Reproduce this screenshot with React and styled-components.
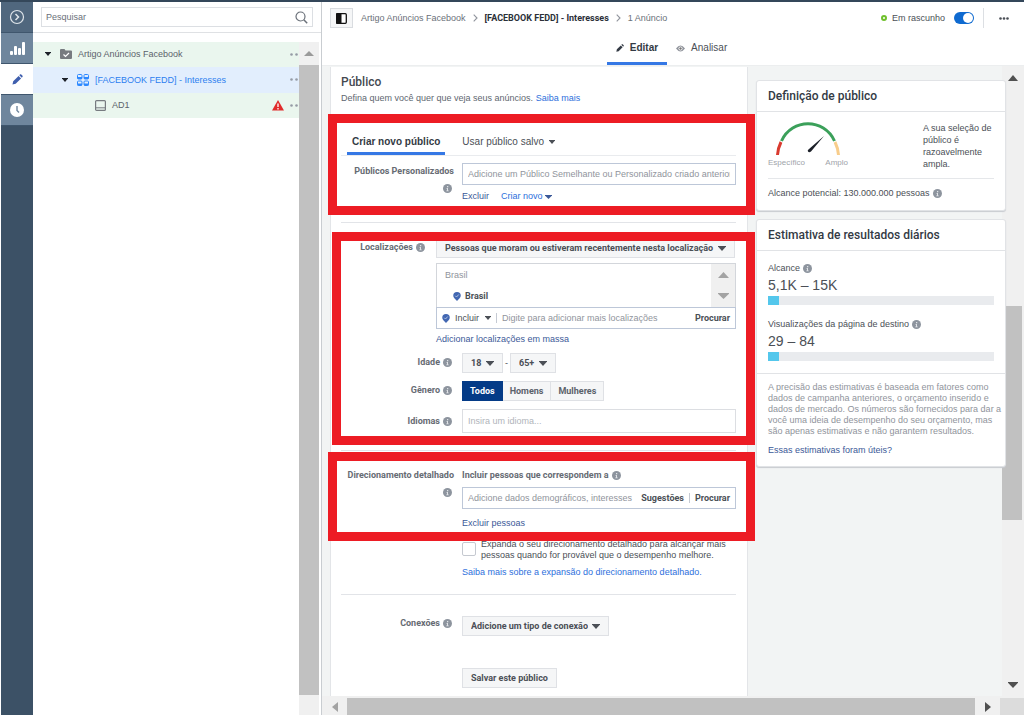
import React from "react";
import styled, { createGlobalStyle, css } from "styled-components";

const Global = createGlobalStyle`
  *, *::before, *::after { box-sizing: border-box; }
  body {
    margin: 0;
    font-family: "Liberation Sans", Arial, sans-serif;
    font-size: 9px;
    line-height: 12px;
    color: #4b4f56;
    background: #fff;
  }
  button, input, select { font: inherit; color: inherit; margin: 0; }
  button { cursor: pointer; }
  a { text-decoration: none; }
  h1, h2, p { margin: 0; font-weight: inherit; font-size: inherit; }
`;

const strong = css`
  font-family: Roboto, "Liberation Sans", sans-serif;
  font-weight: 700;
`;

const Shell = styled.div`
  display: flex;
  height: 100vh;
  border-top: 2px solid #34475a;
  overflow: hidden;
`;

/* Navigation rail */
const Rail = styled.nav`
  display: flex;
  flex-direction: column;
  width: 32px;
  flex: none;
  margin-left: 1px;
  background: #3c5166;
`;
const RailButton = styled.button`
  display: flex;
  align-items: center;
  justify-content: center;
  height: 31px;
  padding: 0;
  border: 0;
  border-bottom: 1px solid #3f566d;
  color: #fff;
  background: ${(p) => (p.$tone === "active" ? "#fff" : p.$tone === "dark" ? "#50677e" : "#6f869d")};
`;

/* Campaign tree */
const Tree = styled.aside`
  display: flex;
  flex-direction: column;
  width: 289px;
  flex: none;
  border-right: 1px solid #c9cdd1;
`;
const SearchBar = styled.div`
  padding: 5px 8px;
  height: 31px;
  border-bottom: 1px solid #dfe1e4;
`;
const SearchField = styled.label`
  display: flex;
  align-items: center;
  height: 20px;
  padding: 0 4px;
  border: 1px solid #dcdfe3;
`;
const BareInput = styled.input`
  flex: 1;
  min-width: 0;
  padding: 0;
  border: 0;
  outline: 0;
  background: none;
  &::placeholder { color: ${(p) => p.$hint || "#90949c"}; opacity: 1; }
`;
const TreeBody = styled.div`
  display: flex;
  flex: 1;
  padding: 9px 2px 0 0;
`;
const TreeList = styled.div`
  flex: 1;
  min-width: 0;
`;
const TreeRow = styled.div`
  display: flex;
  align-items: center;
  gap: 6px;
  height: ${(p) => (p.$selected ? 26 : 25)}px;
  padding: 0 1px 1px ${(p) => p.$indent}px;
  color: ${(p) => (p.$selected ? "#2d7ff0" : "#5b626b")};
  background: ${(p) => (p.$selected ? "#e2eefd" : "#eaf6ee")};
`;
const NodeToggle = styled.button`
  display: flex;
  margin-right: 3px;
  padding: 0;
  border: 0;
  background: none;
`;
const TreeName = styled.span`
  flex: 1;
`;
const Dots = styled.button`
  padding: 0;
  border: 0;
  background: none;
  display: flex;
`;

/* Scroll bars */
const ScrollColumn = styled.div`
  display: flex;
  flex-direction: column;
  align-items: stretch;
  flex: none;
  width: ${(p) => p.$width}px;
  padding-bottom: ${(p) => p.$bottom || 0}px;
  background: #f0f0f0;
`;
const ScrollEnd = styled.div`
  display: flex;
  align-items: center;
  justify-content: center;
  flex: none;
  height: 23px;
  width: ${(p) => p.$width || "auto"};
`;
const Thumb = styled.div`
  flex: ${(p) => p.$grow || 1};
  margin-right: ${(p) => p.$inset || 0}px;
  background: #c1c1c1;
`;
const Gap = styled.div`
  flex: ${(p) => p.$grow};
`;
const ScrollRow = styled.div`
  display: flex;
  align-items: stretch;
  flex: none;
  height: 19px;
  padding-top: 2px;
  overflow: hidden;
  background: #f0f0f0;
`;
const RowEnd = styled.div`
  display: flex;
  align-items: center;
  justify-content: center;
  flex: none;
  width: 25px;
`;
const Corner = styled.div`
  width: 24px;
  background: #dcdcdc;
`;

/* Editor */
const Editor = styled.main`
  display: flex;
  flex-direction: column;
  flex: 1;
  min-width: 0;
`;
const Header = styled.header`
  flex: none;
  height: 64px;
  padding: 4px 8px 0;
  border-bottom: 1px solid #eceeef;
`;
const HeaderRow = styled.div`
  display: flex;
  align-items: center;
  height: 24px;
`;
const PanelButton = styled.button`
  display: flex;
  align-items: center;
  justify-content: center;
  width: 23px;
  height: 20px;
  padding: 0;
  border: 1px solid #d9dce0;
  background: #f5f6f7;
`;
const Crumbs = styled.div`
  display: flex;
  align-items: center;
  gap: 7px;
  flex: 1;
  margin-left: 8px;
  color: #6a7079;
`;
const Current = styled.span`
  ${strong}
  color: #2b3038;
`;
const Status = styled.label`
  display: flex;
  align-items: center;
  gap: 5px;
`;
const Ring = styled.span`
  width: 6px;
  height: 6px;
  border: 2px solid #6fc02c;
  border-radius: 50%;
`;
const Switch = styled.input.attrs({ type: "checkbox", role: "switch" })`
  appearance: none;
  display: flex;
  width: 20px;
  height: 12px;
  margin-left: 4px;
  border-radius: 6px;
  background: #0f6ad0;
  &::after {
    content: "";
    width: 10px;
    height: 10px;
    margin: 1px 1px 1px auto;
    border-radius: 50%;
    background: #fff;
  }
`;
const MoreButton = styled.button`
  display: flex;
  align-items: center;
  height: 20px;
  margin-left: 9px;
  padding: 0 7px 0 15px;
  border: 0;
  border-left: 1px solid #dcdfe3;
  background: none;
`;
const ViewTabs = styled.div`
  display: flex;
  justify-content: center;
  height: 35px;
  padding-right: 3px;
`;
const tabText = css`
  display: flex;
  align-items: center;
  border: 0;
  border-bottom: 3px solid ${(p) => (p.$active ? "#3578e5" : "transparent")};
  background: none;
  font-size: 10px;
  font-weight: ${(p) => (p.$active ? 700 : 400)};
  color: ${(p) => (p.$active ? "#333a44" : "#4b4f56")};
`;
const ViewTab = styled.button`
  ${tabText}
  gap: 6px;
  padding: 4px 9px 0;
`;
const Workspace = styled.div`
  display: flex;
  flex: 1;
  min-height: 0;
  background: #f2f4f4;
`;
const Columns = styled.div`
  display: flex;
  align-items: stretch;
  gap: 8px;
  flex: 1;
  min-width: 0;
  padding: 1px 0 0 8px;
`;

/* Audience form */
const FormCard = styled.form`
  flex: 1;
  min-width: 0;
  padding: 0 11px 0 10px;
  border: 1px solid #e3e5e8;
  border-width: 0 1px;
  background: #fff;
`;
const FormHead = styled.div`
  height: 47px;
  padding-top: 8px;
  color: #606770;
`;
const FormTitle = styled.h1`
  font-family: Roboto, sans-serif;
  font-weight: 500;
  font-size: 12px;
  line-height: 14px;
  margin-bottom: 3px;
  color: #444950;
`;
const Link = styled.a`
  color: ${(p) => (p.$bright ? "#2d6fdc" : "#3b5998")};
`;
const Framed = styled.section`
  display: flow-root;
  position: relative;
  height: ${(p) => p.$height}px;
  &::after {
    content: "";
    position: absolute;
    inset: 0 -19px 0 ${(p) => p.$left}px;
    border: 9px solid #ed1c24;
    pointer-events: none;
    z-index: 3;
  }
`;
const Rule = styled.hr`
  margin: ${(p) => p.$before}px 0 ${(p) => p.$after}px;
  border: 0;
  border-top: 1px solid #e2e4e8;
`;
const AudienceTabs = styled.div`
  display: flex;
  gap: 12px;
  height: 42px;
  padding: 17px 6px 0;
  border-bottom: 1px solid #e9ebee;
`;
const AudienceTab = styled.button`
  ${tabText}
  gap: 5px;
  padding: 0 5px;
`;
const Row = styled.div`
  display: grid;
  grid-template-columns: ${(p) => (p.$wide ? "86px" : "113px")} minmax(0, 1fr);
  column-gap: ${(p) => (p.$wide ? 9 : 8)}px;
  margin-top: ${(p) => p.$top || 8}px;
`;
const Label = styled.label`
  ${strong}
  display: flex;
  flex-wrap: wrap;
  align-content: flex-start;
  justify-content: flex-end;
  align-items: center;
  gap: 7px 3px;
  padding: ${(p) => p.$pad || 3}px ${(p) => (p.$stack ? 0 : 2)}px 0 0;
  white-space: nowrap;
  color: #666b73;
  & > svg { margin-right: ${(p) => (p.$stack ? 2 : 0)}px; }
`;
const FieldTitle = styled.div`
  ${strong}
  display: flex;
  align-items: center;
  gap: 3px;
  padding: 3px 0 6px;
  color: #666b73;
`;
const Field = styled.div`
  display: flex;
  align-items: center;
  height: ${(p) => p.$height || 22}px;
  padding: 0 5px;
  border: 1px solid ${(p) => (p.$plain ? "#dcdee2" : "#bdc7d8")};
  background: #fff;
`;
const Links = styled.div`
  display: flex;
  align-items: center;
  gap: 12px;
  padding-top: ${(p) => p.$top || 5}px;
`;
const TextButton = styled.button`
  ${strong}
  padding: 0 0 0 ${(p) => p.$before || 0}px;
  border: 0;
  background: none;
  white-space: nowrap;
`;
const Divider = styled.span`
  width: 1px;
  height: 10px;
  margin: 0 5px;
  background: #c5cad3;
`;
const Drop = styled.span`
  ${strong}
  display: inline-flex;
  align-items: center;
  gap: 4px;
  height: 20px;
  padding: 0 8px;
  border: 1px solid #dfe1e5;
  background: #f5f6f7;
`;
const BareSelect = styled.select`
  appearance: none;
  padding: 0;
  border: 0;
  outline: 0;
  background: none;
`;
const Inline = styled.div`
  display: flex;
  align-items: center;
  gap: ${(p) => p.$gap || 2}px;
`;
const Places = styled.div`
  display: flex;
  height: 44px;
  margin-top: 5px;
  border: 1px solid #d3d6db;
  border-bottom: 0;
`;
const PlaceList = styled.div`
  flex: 1;
  padding: 5px 8px;
  color: #90949c;
`;
const Place = styled.div`
  ${strong}
  display: flex;
  align-items: center;
  gap: 4px;
  margin: 9px 0 0 8px;
  color: #4b4f56;
`;
const Stepper = styled.div`
  display: flex;
  flex-direction: column;
  align-items: center;
  justify-content: space-between;
  width: 24px;
  padding: 8px 0;
  background: #f0f0f0;
`;
const Segments = styled.div`
  display: flex;
`;
const Segment = styled.button`
  ${strong}
  height: 20px;
  padding: 0 7px;
  border: 1px solid ${(p) => (p.$on ? "#043b87" : "#dfe1e5")};
  border-left-width: ${(p) => (p.$on ? 1 : 0)}px;
  color: ${(p) => (p.$on ? "#fff" : "#5b626b")};
  background: ${(p) => (p.$on ? "#043b87" : "#f5f6f7")};
`;
const Expand = styled.div`
  display: flex;
  gap: 5px;
  margin: -2px 0 0 121px;
  line-height: 11px;
`;
const Check = styled.input.attrs({ type: "checkbox" })`
  appearance: none;
  flex: none;
  width: 14px;
  height: 14px;
  margin-top: 3px;
  border: 1px solid #c5c9d0;
  border-radius: 2px;
  background: #fff;
`;
const Indented = styled.div`
  margin: ${(p) => p.$top}px 0 0 121px;
`;
const PlainButton = styled.button`
  ${strong}
  height: 20px;
  padding: 0 8px;
  border: 1px solid #dfe1e5;
  background: #f5f6f7;
`;

/* Estimates */
const Side = styled.div`
  position: relative;
  z-index: 1;
  display: flex;
  flex-direction: column;
  gap: 8px;
  flex: none;
  width: 250px;
  margin-right: -4px;
  padding-top: 13px;
`;
const Card = styled.section`
  border: 1px solid #e1e3e6;
  border-radius: 3px;
  background: #fff;
  box-shadow: 0 1px 1px #c8cbd0;
`;
const CardTitle = styled.h2`
  font-family: Roboto, sans-serif;
  font-weight: 500;
  font-size: 12px;
  line-height: 30px;
  padding: 0 11px;
  border-bottom: 1px solid #e1e3e6;
  color: #333a44;
`;
const Meter = styled.div`
  display: flex;
  justify-content: space-between;
  margin: 0 11px;
  padding: 10px 0 8px;
  border-bottom: 1px solid #e5e7ea;
`;
const Gauge = styled.figure`
  width: 80px;
  margin: 0;
  svg { display: block; margin: 0 auto; }
`;
const Scale = styled.figcaption`
  display: flex;
  justify-content: space-between;
  padding-top: 1px;
  font-size: 8px;
  line-height: 10px;
  color: #a0a4aa;
`;
const Verdict = styled.p`
  width: 71px;
`;
const Reach = styled.p`
  display: flex;
  align-items: center;
  gap: 3px;
  padding: 8px 11px 11px;
`;
const Stat = styled.div`
  margin: 11px 11px 0;
  & + & { margin-top: 13px; }
`;
const StatName = styled.div`
  display: flex;
  align-items: center;
  gap: 3px;
`;
const StatValue = styled.div`
  font-size: 14px;
  line-height: 16px;
  margin: 3px 0;
`;
const Bar = styled.div`
  height: 9px;
  background: #e9ebee;
`;
const Fill = styled.div`
  width: 5%;
  height: 100%;
  background: #54c7ec;
`;
const Note = styled.div`
  margin-top: 12px;
  padding: 8px 2px 10px 11px;
  border-top: 1px solid #e1e3e6;
  line-height: 11px;
  color: #90949c;
  p { margin-bottom: 8px; }
`;

const Caret = ({ w = 7, h = 4, color = "#4b4f56", up }) => (
  <svg width={w} height={h} viewBox="0 0 8 5" preserveAspectRatio="none" aria-hidden="true">
    <path d={up ? "M0 5L4 0L8 5Z" : "M0 0H8V.6L4 5L0 .6Z"} fill={color} />
  </svg>
);
const SideCaret = ({ flip, color }) => (
  <svg width="6" height="10" viewBox="0 0 6 10" aria-hidden="true">
    <path d={flip ? "M0 0L6 5L0 10Z" : "M6 0L0 5L6 10Z"} fill={color} />
  </svg>
);
const Info = () => (
  <svg width="9" height="9" viewBox="0 0 18 18" aria-hidden="true">
    <circle cx="9" cy="9" r="9" fill="#8d949e" />
    <path d="M7 8H10V13H11.500V14.500H6.500V13H8V9.500H7ZM8 4H10.500V6.300H8Z" fill="#dfe2e6" />
  </svg>
);
const Pin = () => (
  <svg width="8" height="9" viewBox="0 0 16 18" aria-hidden="true">
    <path d="M8 0A7.500 7.500 0 0 1 15.500 7.500C15.500 11 12 13.500 8 18C4 13.500 .5 11 .5 7.500A7.500 7.500 0 0 1 8 0Z" fill="#4267b2" />
    <path d="M4.500 7.500L7 10L11.500 5" fill="none" stroke="#c9d5ec" strokeWidth="1.600" />
  </svg>
);
const Pencil = ({ size, color }) => (
  <svg width={size} height={size} viewBox="0 0 12 12" aria-hidden="true">
    <path d="M0.500 11.500L1.300 8L7.200 2.100L9.900 4.800L4 10.700ZM8 1.300L8.900 .4Q9.500 0 10.100 .5L11.500 1.900Q12 2.500 11.500 3.100L10.700 4Z" fill={color} />
  </svg>
);
const Ellipsis = ({ n = 2, color = "#959ba5", w = 8 }) => (
  <svg width={w} height="3" viewBox={`0 0 ${w} 3`} aria-hidden="true">
    {Array.from({ length: n }, (_, i) => (
      <circle key={i} cx={1.5 + (i * (w - 3)) / (n - 1)} cy="1.500" r="1.300" fill={color} />
    ))}
  </svg>
);
const Chevron = () => (
  <svg width="5" height="8" viewBox="0 0 5 8" aria-hidden="true">
    <path d="M.7 .7L4 4L.7 7.300" fill="none" stroke="#90949c" strokeWidth="1.100" />
  </svg>
);

export default function App() {
  return (
    <>
      <Global />
      <Shell>
        <Rail>
          <RailButton $tone="dark" aria-label="Expandir">
            <svg width="16" height="16" viewBox="0 0 16 16" fill="none" stroke="#dfe5ea">
              <circle cx="8" cy="8" r="6.500" strokeWidth="1.200" />
              <path d="M6.500 5L9.500 8L6.500 11" strokeWidth="1.500" />
            </svg>
          </RailButton>
          <RailButton aria-label="Resultados">
            <svg width="15" height="13" viewBox="0 0 15 13" fill="#fff">
              <rect y="9" width="3" height="4" rx="1" />
              <rect x="4" y="4" width="3" height="9" rx="1" />
              <rect x="8" y="6" width="3" height="7" rx="1" />
              <rect x="12" y="0" width="3" height="13" rx="1" />
            </svg>
          </RailButton>
          <RailButton $tone="active" aria-label="Editar">
            <Pencil size={11} color="#3f5fae" />
          </RailButton>
          <RailButton aria-label="Histórico">
            <svg width="14" height="14" viewBox="0 0 14 14">
              <circle cx="7" cy="7" r="7" fill="#fff" />
              <path d="M7 3V7.500L9 9.500" fill="none" stroke="#6f869d" strokeWidth="1.400" />
            </svg>
          </RailButton>
        </Rail>

        <Tree>
          <SearchBar>
            <SearchField>
              <BareInput placeholder="Pesquisar" aria-label="Pesquisar" $hint="#6a7079" />
              <svg width="13" height="13" viewBox="0 0 13 13" fill="none" stroke="#6a7079">
                <circle cx="5.500" cy="5.500" r="4.500" strokeWidth="1.200" />
                <path d="M8.800 8.800L12.200 12.200" strokeWidth="1.500" />
              </svg>
            </SearchField>
          </SearchBar>
          <TreeBody>
            <TreeList>
              <TreeRow $indent={12}>
                <NodeToggle aria-label="Recolher campanha"><Caret w={6} color="#1d2129" /></NodeToggle>
                <svg width="12" height="12" viewBox="0 0 12 12">
                  <path d="M0 2Q0 1 1 1H4.500L5.500 2.500H11Q12 2.500 12 3.500V10Q12 11 11 11H1Q0 11 0 10Z" fill="#777b80" />
                  <path d="M3.500 6.500L5.500 8.500L9 5" fill="none" stroke="#fff" strokeWidth="1.200" />
                </svg>
                <TreeName>Artigo Anúncios Facebook</TreeName>
                <Dots aria-label="Mais opções"><Ellipsis /></Dots>
              </TreeRow>
              <TreeRow $indent={29} $selected>
                <NodeToggle aria-label="Recolher conjunto"><Caret w={6} color="#1d2129" /></NodeToggle>
                <svg width="12" height="12" viewBox="0 0 12 12">
                  {[0, 6.5].map((x) =>
                    [0, 6.5].map((y) => (
                      <g key={`${x}-${y}`}>
                        <rect x={x + 0.5} y={y + 0.5} width="4.500" height="4.500" rx="1" fill="none" stroke="#2d88ff" />
                        <rect x={x + 0.5} y={y + 3} width="4.500" height="2" fill="#2d88ff" />
                      </g>
                    ))
                  )}
                </svg>
                <TreeName>[FACEBOOK FEDD] - Interesses</TreeName>
                <Dots aria-label="Mais opções"><Ellipsis /></Dots>
              </TreeRow>
              <TreeRow $indent={62}>
                <svg width="11" height="11" viewBox="0 0 11 11" fill="none" stroke="#777b80">
                  <rect x=".6" y=".6" width="9.800" height="9.800" rx="1" strokeWidth="1.200" />
                  <path d="M1 7.800H10" />
                </svg>
                <TreeName>AD1</TreeName>
                <svg width="12" height="11" viewBox="0 0 12 11" aria-label="Erro">
                  <path d="M6 0L12 10.500H0Z" fill="#e02b2b" />
                  <path d="M6 3.500V7M6 8V9.500" stroke="#fff" strokeWidth="1.300" />
                </svg>
                <Dots aria-label="Mais opções"><Ellipsis /></Dots>
              </TreeRow>
            </TreeList>
            <ScrollColumn $width={20} $bottom={20}>
              <ScrollEnd><Caret w={10} h={5} color="#9a9a9a" up /></ScrollEnd>
              <Thumb />
            </ScrollColumn>
          </TreeBody>
        </Tree>

        <Editor>
          <Header>
            <HeaderRow>
              <PanelButton aria-label="Mostrar painel">
                <svg width="11" height="11" viewBox="0 0 11 11">
                  <rect x=".7" y=".7" width="9.600" height="9.600" rx="1" fill="#fff" stroke="#111" strokeWidth="1.300" />
                  <rect x="0" y="0" width="5.500" height="11" rx="1" fill="#111" />
                </svg>
              </PanelButton>
              <Crumbs>
                <span>Artigo Anúncios Facebook</span>
                <Chevron />
                <Current>[FACEBOOK FEDD] - Interesses</Current>
                <Chevron />
                <span>1 Anúncio</span>
              </Crumbs>
              <Status>
                <Ring />
                Em rascunho
                <Switch defaultChecked />
              </Status>
              <MoreButton aria-label="Mais"><Ellipsis n={3} w={10} color="#4b4f56" /></MoreButton>
            </HeaderRow>
            <ViewTabs>
              <ViewTab $active><Pencil size={8} color="#333a44" />Editar</ViewTab>
              <ViewTab>
                <svg width="9" height="7" viewBox="0 0 9 7">
                  <path d="M0 3.500Q4.500 -2.500 9 3.500Q4.500 9.500 0 3.500Z" fill="#90949c" />
                  <circle cx="4.500" cy="3.500" r="2" fill="#fff" />
                  <circle cx="4.500" cy="3.500" r="1.200" fill="#777" />
                </svg>
                Analisar
              </ViewTab>
            </ViewTabs>
          </Header>

          <Workspace>
            <Columns>
              <FormCard onSubmit={(e) => e.preventDefault()}>
                <FormHead>
                  <FormTitle>Público</FormTitle>
                  <p>Defina quem você quer que veja seus anúncios. <Link href="#" $bright>Saiba mais</Link></p>
                </FormHead>

                <Framed $height={101} $left={-13}>
                  <AudienceTabs>
                    <AudienceTab type="button" $active>Criar novo público</AudienceTab>
                    <AudienceTab type="button">Usar público salvo <Caret w={6} /></AudienceTab>
                  </AudienceTabs>
                  <Row $top={7}>
                    <Label htmlFor="custom" $stack $pad={2}>Públicos Personalizados<Info /></Label>
                    <div>
                      <Field>
                        <BareInput id="custom" placeholder="Adicione um Público Semelhante ou Personalizado criado anteriormente" />
                      </Field>
                      <Links>
                        <Link href="#">Excluir</Link>
                        <Link href="#" $bright>Criar novo <Caret color="#3b5998" /></Link>
                      </Links>
                    </div>
                  </Row>
                </Framed>
                <Rule $before={7} $after={9} />

                <Framed $height={213} $left={-9}>
                  <Row $wide $top={6}>
                    <Label htmlFor="where">Localizações<Info /></Label>
                    <div>
                      <Drop>
                        <BareSelect id="where"><option>Pessoas que moram ou estiveram recentemente nesta localização</option></BareSelect>
                        <Caret w={8} h={5} />
                      </Drop>
                      <Places>
                        <PlaceList>
                          Brasil
                          <Place><Pin />Brasil</Place>
                        </PlaceList>
                        <Stepper>
                          <Caret w={11} h={6} color="#a3a3a3" up />
                          <Caret w={11} h={6} color="#a3a3a3" />
                        </Stepper>
                      </Places>
                      <Field>
                        <Inline $gap={5}>
                          <Pin />
                          <BareSelect aria-label="Incluir ou excluir"><option>Incluir</option></BareSelect>
                          <Caret w={6} />
                        </Inline>
                        <Divider />
                        <BareInput placeholder="Digite para adicionar mais localizações" aria-label="Localização" />
                        <TextButton type="button">Procurar</TextButton>
                      </Field>
                      <Links $top={4}><Link href="#">Adicionar localizações em massa</Link></Links>
                    </div>
                  </Row>
                  <Row>
                    <Label htmlFor="age">Idade<Info /></Label>
                    <Inline>
                      <Drop><BareSelect id="age"><option>18</option></BareSelect><Caret w={8} h={5} /></Drop>
                      -
                      <Drop><BareSelect aria-label="Idade máxima"><option>65+</option></BareSelect><Caret w={8} h={5} /></Drop>
                    </Inline>
                  </Row>
                  <Row>
                    <Label as="span">Gênero<Info /></Label>
                    <Segments role="group" aria-label="Gênero">
                      <Segment type="button" $on>Todos</Segment>
                      <Segment type="button">Homens</Segment>
                      <Segment type="button">Mulheres</Segment>
                    </Segments>
                  </Row>
                  <Row>
                    <Label htmlFor="lang" $pad={6}>Idiomas<Info /></Label>
                    <Field $height={24} $plain>
                      <BareInput id="lang" placeholder="Insira um idioma..." $hint="#b0b4ba" />
                    </Field>
                  </Row>
                </Framed>
                <Rule $before={5} $after={1} />

                <Framed $height={89} $left={-13}>
                  <Row $top={14}>
                    <Label htmlFor="detail" $stack>Direcionamento detalhado<Info /></Label>
                    <div>
                      <FieldTitle>Incluir pessoas que correspondem a<Info /></FieldTitle>
                      <Field>
                        <BareInput id="detail" placeholder="Adicione dados demográficos, interesses ou comportamentos" />
                        <TextButton type="button" $before={8}>Sugestões</TextButton>
                        <Divider />
                        <TextButton type="button">Procurar</TextButton>
                      </Field>
                      <Links $top={8}><Link href="#">Excluir pessoas</Link></Links>
                    </div>
                  </Row>
                </Framed>

                <Expand>
                  <Check id="expand" />
                  <label htmlFor="expand">Expanda o seu direcionamento detalhado para alcançar mais pessoas quando for provável que o desempenho melhore.</label>
                </Expand>
                <Indented $top={5}>
                  <Link href="#" $bright>Saiba mais sobre a expansão do direcionamento detalhado.</Link>
                </Indented>
                <Rule $before={16} $after={21} />
                <Row>
                  <Label htmlFor="conn" $pad={1}>Conexões<Info /></Label>
                  <div>
                    <Drop><BareSelect id="conn"><option>Adicione um tipo de conexão</option></BareSelect><Caret w={8} h={5} /></Drop>
                  </div>
                </Row>
                <Indented $top={32}><PlainButton type="button">Salvar este público</PlainButton></Indented>
              </FormCard>

              <Side>
                <Card>
                  <CardTitle>Definição de público</CardTitle>
                  <Meter>
                    <Gauge>
                      <svg width="64" height="35" viewBox="0 0 64 35" fill="none" strokeWidth="3">
                        <path d="M1.500 33Q2 26 5 20" stroke="#d93a2f" />
                        <path d="M5.500 19C16 -4 48 -4 58.500 19" stroke="#3ba05a" />
                        <path d="M59 20Q62 26 62.500 33" stroke="#f8cd8b" />
                        <path d="M48 14L35 29.500Q33 31 32 29.500Q31 28 33 27Z" fill="#1d2129" />
                      </svg>
                      <Scale><span>Específico</span><span>Amplo</span></Scale>
                    </Gauge>
                    <Verdict>A sua seleção de público é razoavelmente ampla.</Verdict>
                  </Meter>
                  <Reach>Alcance potencial: 130.000.000 pessoas <Info /></Reach>
                </Card>

                <Card>
                  <CardTitle>Estimativa de resultados diários</CardTitle>
                  <Stat>
                    <StatName>Alcance <Info /></StatName>
                    <StatValue>5,1K – 15K</StatValue>
                    <Bar><Fill /></Bar>
                  </Stat>
                  <Stat>
                    <StatName>Visualizações da página de destino <Info /></StatName>
                    <StatValue>29 – 84</StatValue>
                    <Bar><Fill /></Bar>
                  </Stat>
                  <Note>
                    <p>A precisão das estimativas é baseada em fatores como dados de campanha anteriores, o orçamento inserido e dados de mercado. Os números são fornecidos para dar a você uma ideia de desempenho do seu orçamento, mas são apenas estimativas e não garantem resultados.</p>
                    <Link href="#">Essas estimativas foram úteis?</Link>
                  </Note>
                </Card>
              </Side>
            </Columns>
            <ScrollColumn $width={22}>
              <ScrollEnd><Caret w={10} h={6} color="#505050" up /></ScrollEnd>
              <Gap $grow={217} />
              <Thumb $grow={214} $inset={2} />
              <Gap $grow={153} />
              <ScrollEnd><Caret w={10} h={6} color="#505050" /></ScrollEnd>
            </ScrollColumn>
          </Workspace>
          <ScrollRow>
            <RowEnd><SideCaret color="#a3a3a3" /></RowEnd>
            <Thumb />
            <RowEnd><SideCaret flip color="#505050" /></RowEnd>
            <Corner />
          </ScrollRow>
        </Editor>
      </Shell>
    </>
  );
}
